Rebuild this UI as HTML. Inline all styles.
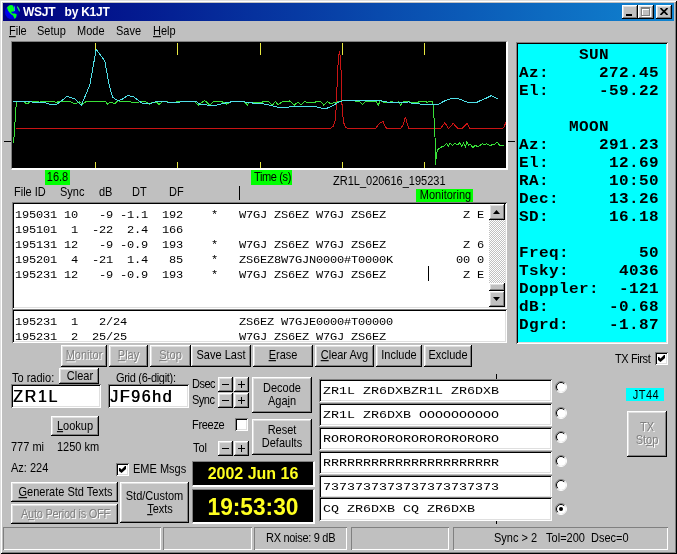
<!DOCTYPE html>
<html><head><meta charset="utf-8"><title>WSJT by K1JT</title>
<style>
html,body{margin:0;padding:0;background:#c0c0c0;}
body{width:677px;height:554px;background:#c0c0c0;position:relative;overflow:hidden;font-family:"Liberation Sans",sans-serif;font-size:11px;color:#000;}
.a{position:absolute;white-space:pre;}
.t{position:absolute;white-space:pre;line-height:13px;height:13px;transform:scaleY(1.125);transform-origin:0 10.3px;}
.bt{display:inline-block;transform:scaleY(1.125);transform-origin:50% 10.3px;}
.btn{position:absolute;background:#c0c0c0;box-shadow:inset -1px -1px 0 #000,inset 1px 1px 0 #fff,inset -2px -2px 0 #808080,inset 2px 2px 0 #dfdfdf;text-align:center;white-space:pre;line-height:13px;box-sizing:border-box;}
.dis{color:#808080;text-shadow:1px 1px 0 #fff;}
.sunk{position:absolute;background:#fff;box-shadow:inset 1px 1px 0 #808080,inset -1px -1px 0 #fff,inset 2px 2px 0 #000,inset -2px -2px 0 #dfdfdf;box-sizing:border-box;}
.g{will-change:transform;}
.mono{font-family:"Liberation Mono",monospace;}
.sb{position:absolute;top:527px;height:23px;box-shadow:inset 1px 1px 0 #808080,inset -1px -1px 0 #fff;box-sizing:border-box;}
.grn{position:absolute;background:#00ff00;}
u{text-decoration:underline;}
.rad{position:absolute;width:12px;height:12px;}
.chk{position:absolute;width:13px;height:13px;background:#fff;box-shadow:inset 1px 1px 0 #808080,inset -1px -1px 0 #fff,inset 2px 2px 0 #000,inset -2px -2px 0 #dfdfdf;box-sizing:border-box;}
</style></head>
<body>
<div class="a" style="left:0;top:0;width:677px;height:554px;box-sizing:border-box;box-shadow:inset 1px 1px 0 #dfdfdf,inset -1px -1px 0 #000,inset 2px 2px 0 #fff,inset -2px -2px 0 #808080;"></div>
<div class="a" style="left:3px;top:3px;width:671px;height:18px;background:linear-gradient(to right,#000080,#1084d0);"></div>
<svg class="a" style="left:4px;top:4px" width="17" height="16" viewBox="0 0 17 16"><defs><radialGradient id="gl" cx="35%" cy="55%" r="70%"><stop offset="0" stop-color="#0000ff"/><stop offset="0.6" stop-color="#0000d8"/><stop offset="1" stop-color="#000080"/></radialGradient></defs><circle cx="8.4" cy="8" r="7.5" fill="url(#gl)"/><path d="M3 3.5 L5 1.6 L7 1 L9 1.6 L10 4 L10.2 7 L9 7.8 L7.6 7.4 L7.2 8.6 L8.5 9.4 L11 9.4 L12.8 10.4 L12.2 13 L10.8 14.9 L10 13.5 L9 11.5 L7.4 10.4 L5.5 8.5 L4 6.5 Z" fill="#00ff20"/><path d="M13.2 2 L14.6 3.4 L15.7 5.5 L15.9 7.7 L14.8 7 L14 5 L13 3.4 Z" fill="#20f060"/><path d="M10.2 1.6 L10.9 3.2 L10.8 7 L10.1 7.2 L10.2 4 Z" fill="#40d0ff"/></svg>
<div class="a g" style="left:23px;top:5px;font-weight:bold;font-size:12px;line-height:14px;color:#fff;letter-spacing:-0.25px;">WSJT   by K1JT</div>
<div class="btn" style="left:622px;top:5px;width:16px;height:14px;"><div class="a" style="left:4px;top:9px;width:6px;height:2px;background:#000"></div></div>
<div class="btn" style="left:638px;top:5px;width:16px;height:14px;"><div class="a" style="left:4px;top:3px;width:9px;height:9px;box-sizing:border-box;border:1px solid #fff;border-top-width:2px"></div><div class="a" style="left:3px;top:2px;width:9px;height:9px;box-sizing:border-box;border:1px solid #808080;border-top-width:2px"></div></div>
<div class="btn" style="left:656px;top:5px;width:16px;height:14px;"><svg class="a" style="left:4px;top:3px" width="8" height="7" viewBox="0 0 8 7"><path d="M0.5 0 L7.5 7 M7.5 0 L0.5 7" stroke="#000" stroke-width="1.7" fill="none"/></svg></div>
<div class="t" style="left:9px;top:25px;"><u>F</u>ile</div>
<div class="t" style="left:37px;top:25px;">Setup</div>
<div class="t" style="left:77px;top:25px;">Mode</div>
<div class="t" style="left:116px;top:25px;">Save</div>
<div class="t" style="left:153px;top:25px;"><u>H</u>elp</div>
<div class="a" style="left:11px;top:41px;width:497px;height:129px;box-sizing:border-box;background:#000;border:1px solid #808080;border-right:2px solid #fff;border-bottom:2px solid #fff;"></div>
<svg class="a" style="left:12px;top:42px" width="494" height="126" viewBox="0 0 494 126"><rect x="83" y="1" width="1" height="12" fill="#e8e840"/><rect x="83" y="120" width="1" height="6" fill="#e8e840"/><rect x="165" y="1" width="1" height="12" fill="#e8e840"/><rect x="165" y="120" width="1" height="6" fill="#e8e840"/><rect x="248" y="1" width="1" height="12" fill="#e8e840"/><rect x="248" y="120" width="1" height="6" fill="#e8e840"/><rect x="330" y="1" width="1" height="12" fill="#e8e840"/><rect x="330" y="120" width="1" height="6" fill="#e8e840"/><rect x="412" y="1" width="1" height="12" fill="#e8e840"/><rect x="412" y="120" width="1" height="6" fill="#e8e840"/><polyline points="3.5,86.7 317.9,86.7 321.0,84.5 322.9,80.3 324.0,68.0 324.6,58.0 325.4,32.3 326.5,16.0 327.5,9.1 328.5,16.0 329.2,32.0 329.7,58.0 330.4,68.0 331.4,80.0 333.4,85.0 336.6,86.7 363.7,86.7 366.6,82.1 371.0,79.2 373.3,85.0 375.5,86.7 388.5,86.7 391.5,82.1 393.4,74.8 395.2,82.1 397.0,86.7 428.4,86.7 432.8,80.7 436.5,86.6 441.2,81.4 446.0,86.7 449.8,86.7 455.0,81.4 458.0,86.7 490.8,86.5 492.4,84.4 493.8,80.3" fill="none" stroke="#c81414" stroke-width="1" shape-rendering="crispEdges"/><polyline points="1.2,101.3 2.4,91.7 3.5,70.3 4.6,59.5 12.0,59.5 15.0,62.2 17.0,60.5 20.2,59.0 23.0,60.0 25.0,58.8 28.0,60.5 30.0,59.0 33.0,59.8 36.0,59.0 40.0,59.3 44.0,60.3 49.7,59.2 57.0,59.2 63.0,62.0 67.4,60.0 70.4,62.0 74.8,59.2 89.6,59.5 93.2,59.2 95.6,62.2 98.3,60.0 102.8,61.5 106.5,58.5 108.7,60.0 113.0,59.2 117.5,59.2 119.8,60.3 126.4,60.3 128.0,59.5 132.3,59.2 137.5,62.2 141.0,60.0 145.0,60.4 147.0,62.5 150.8,59.5 162.0,60.7 166.3,59.0 170.7,60.0 182.5,59.5 186.4,63.2 192.6,58.5 197.8,63.0 202.2,59.2 209.6,59.5 214.8,62.2 219.2,59.5 231.7,59.2 235.4,63.0 237.0,60.4 249.5,60.5 252.4,59.2 256.0,59.2 260.5,63.0 263.5,59.5 266.0,63.0 270.0,60.0 277.5,59.0 282.4,63.0 286.0,60.0 289.0,63.0 292.8,59.5 295.0,60.4 303.0,60.4 304.6,59.2 308.3,59.5 311.7,63.0 315.7,59.5 318.0,61.5 323.8,60.4 328.2,59.2 332.7,58.5 347.4,59.2 350.4,62.6 354.0,59.2 363.7,59.0 366.3,63.0 368.4,58.5 371.0,60.0 378.0,60.7 379.0,59.5 381.9,60.4 386.3,60.0 388.5,63.0 391.5,59.5 396.6,59.0 399.6,61.0 405.5,60.7 407.7,59.0 413.6,59.0 415.0,60.4 417.3,59.0 420.3,59.0 421.4,63.7 422.2,80.0 423.0,95.4 423.3,108.0 423.7,123.4 424.3,112.0 425.5,108.0 428.3,105.5 432.4,103.9 434.3,101.4 436.4,103.9 438.0,101.1 440.5,103.4 442.9,101.4 446.1,102.7 447.8,100.6 449.9,104.4 451.5,101.1 453.5,104.7 454.8,99.5 456.7,103.4 458.3,102.3 460.8,105.5 463.2,103.1 465.6,104.7 470.5,101.8 472.1,102.7 474.6,101.8 477.8,103.4 482.7,102.3 485.1,100.1 487.5,103.1 491.6,103.4" fill="none" stroke="#38e038" stroke-width="1" shape-rendering="crispEdges"/><polyline points="1.0,59.3 12.8,59.3 20.0,60.0 31.0,60.0 38.0,62.2 45.3,62.0 49.0,59.2 54.9,54.4 62.3,56.6 69.6,63.4 71.5,58.0 75.5,48.5 77.8,43.0 84.2,7.3 92.8,18.8 97.3,44.0 100.7,55.4 105.7,58.5 109.4,57.8 116.0,53.3 122.0,55.1 130.0,61.0 138.2,61.5 145.6,59.2 153.0,59.2 157.4,60.7 164.8,60.7 172.2,59.2 184.0,59.2 187.4,62.0 194.8,63.0 205.0,63.0 211.0,61.5 218.5,60.0 224.4,59.2 230.3,59.2 234.7,60.7 249.5,61.5 256.9,63.0 265.7,65.2 276.0,65.2 280.0,64.4 287.0,64.9 304.6,64.9 311.2,66.6 314.2,66.6 320.8,63.7 326.7,60.0 332.7,58.2 366.6,58.5 372.5,59.5 378.0,60.7 383.3,60.4 396.6,60.0 399.6,61.5 407.0,61.9 411.4,62.5 426.2,62.5 432.0,59.2 438.0,57.0 442.4,56.3 448.3,57.3 455.7,60.4 464.6,60.4 471.2,57.3 472.9,56.8 479.4,53.6 485.6,56.8" fill="none" stroke="#50e0e8" stroke-width="1" shape-rendering="crispEdges"/></svg>
<div class="a" style="left:4px;top:141px;width:7px;height:1px;background:#000"></div>
<div class="a" style="left:508px;top:141px;width:7px;height:1px;background:#000"></div>
<div class="grn" style="left:45px;top:170px;width:25px;height:15px;"></div>
<div class="t" style="left:45px;top:171px;width:25px;text-align:center;">16.8</div>
<div class="grn" style="left:251px;top:170px;width:41px;height:15px;"></div>
<div class="t" style="left:252px;top:171px;width:41px;text-align:center;letter-spacing:-0.35px;">Time (s)</div>
<div class="t" style="left:333px;top:175px;">ZR1L_020616_195231</div>
<div class="grn" style="left:416px;top:189px;width:57px;height:13px;"></div>
<div class="t" style="left:417px;top:189px;width:57px;text-align:center;">Monitoring</div>
<div class="t" style="left:14px;top:186px;">File ID</div>
<div class="t" style="left:60px;top:186px;">Sync</div>
<div class="t" style="left:99px;top:186px;">dB</div>
<div class="t" style="left:132px;top:186px;">DT</div>
<div class="t" style="left:169px;top:186px;">DF</div>
<div class="a" style="left:239px;top:186px;width:1px;height:14px;background:#000"></div>
<div class="sunk" style="left:12px;top:202px;width:495px;height:107px;"></div>
<div class="a mono" style="left:15px;top:207.5px;font-size:12px;line-height:15px;height:15px;letter-spacing:-0.2px;color:#000;transform:scaleY(0.87);transform-origin:0 10.69px;">195031 10   -9 -1.1  192    *   W7GJ ZS6EZ W7GJ ZS6EZ           Z E</div>
<div class="a mono" style="left:15px;top:222.5px;font-size:12px;line-height:15px;height:15px;letter-spacing:-0.2px;color:#000;transform:scaleY(0.87);transform-origin:0 10.69px;">195101  1  -22  2.4  166</div>
<div class="a mono" style="left:15px;top:237.5px;font-size:12px;line-height:15px;height:15px;letter-spacing:-0.2px;color:#000;transform:scaleY(0.87);transform-origin:0 10.69px;">195131 12   -9 -0.9  193    *   W7GJ ZS6EZ W7GJ ZS6EZ           Z 6</div>
<div class="a mono" style="left:15px;top:252.5px;font-size:12px;line-height:15px;height:15px;letter-spacing:-0.2px;color:#000;transform:scaleY(0.87);transform-origin:0 10.69px;">195201  4  -21  1.4   85    *   ZS6EZ8W7GJN0000#T0000K         00 0</div>
<div class="a mono" style="left:15px;top:267.5px;font-size:12px;line-height:15px;height:15px;letter-spacing:-0.2px;color:#000;transform:scaleY(0.87);transform-origin:0 10.69px;">195231 12   -9 -0.9  193    *   W7GJ ZS6EZ W7GJ ZS6EZ           Z E</div>
<div class="a" style="left:428px;top:266px;width:1px;height:15px;background:#000"></div>
<div class="a" style="left:489px;top:204px;width:16px;height:103px;background:repeating-conic-gradient(#fff 0% 25%, #c0c0c0 0% 50%) 0 0/2px 2px;"></div>
<div class="btn" style="left:489px;top:204px;width:16px;height:16px;"><svg class="a" style="left:4px;top:6px" width="7" height="4"><path d="M0 4 L3.5 0 L7 4 Z" fill="#000"/></svg></div>
<div class="btn" style="left:489px;top:283px;width:16px;height:8px;"></div>
<div class="btn" style="left:489px;top:291px;width:16px;height:16px;"><svg class="a" style="left:4px;top:6px" width="7" height="4"><path d="M0 0 L3.5 4 L7 0 Z" fill="#000"/></svg></div>
<div class="sunk" style="left:12px;top:309px;width:495px;height:34px;"></div>
<div class="a mono" style="left:15px;top:314.5px;font-size:12px;line-height:15px;height:15px;letter-spacing:-0.2px;color:#000;transform:scaleY(0.87);transform-origin:0 10.69px;">195231  1   2/24                ZS6EZ W7GJE0000#T00000</div>
<div class="a mono" style="left:15px;top:329.5px;font-size:12px;line-height:15px;height:15px;letter-spacing:-0.2px;color:#000;transform:scaleY(0.87);transform-origin:0 10.69px;">195231  2  25/25                W7GJ ZS6EZ W7GJ ZS6EZ</div>
<div class="btn dis" style="left:61px;top:345px;width:46px;height:22px;padding-top:4px;"><span class="bt"><u>M</u>onitor</span></div>
<div class="btn dis" style="left:109px;top:345px;width:39px;height:22px;padding-top:4px;"><span class="bt"><u>P</u>lay</span></div>
<div class="btn dis" style="left:150px;top:345px;width:41px;height:22px;padding-top:4px;"><span class="bt"><u>S</u>top</span></div>
<div class="btn" style="left:191px;top:345px;width:60px;height:22px;padding-top:4px;"><span class="bt">Save Last</span></div>
<div class="btn" style="left:253px;top:345px;width:60px;height:22px;padding-top:4px;"><span class="bt"><u>E</u>rase</span></div>
<div class="btn" style="left:315px;top:345px;width:59px;height:22px;padding-top:4px;"><span class="bt"><u>C</u>lear Avg</span></div>
<div class="btn" style="left:376px;top:345px;width:46px;height:22px;padding-top:4px;"><span class="bt">Include</span></div>
<div class="btn" style="left:424px;top:345px;width:48px;height:22px;padding-top:4px;"><span class="bt">Exclude</span></div>
<div class="sunk" style="left:516px;top:42px;width:152px;height:302px;background:#00ffff;"></div>
<div class="a mono" style="left:519px;top:45.5px;font-size:16px;line-height:18px;height:18px;letter-spacing:0.4px;font-weight:bold;color:#000;transform:scaleY(0.87);transform-origin:0 13.26px;">      SUN</div>
<div class="a mono" style="left:519px;top:63.5px;font-size:16px;line-height:18px;height:18px;letter-spacing:0.4px;font-weight:bold;color:#000;transform:scaleY(0.87);transform-origin:0 13.26px;">Az:     272.45</div>
<div class="a mono" style="left:519px;top:81.5px;font-size:16px;line-height:18px;height:18px;letter-spacing:0.4px;font-weight:bold;color:#000;transform:scaleY(0.87);transform-origin:0 13.26px;">El:     -59.22</div>
<div class="a mono" style="left:519px;top:117.5px;font-size:16px;line-height:18px;height:18px;letter-spacing:0.4px;font-weight:bold;color:#000;transform:scaleY(0.87);transform-origin:0 13.26px;">     MOON</div>
<div class="a mono" style="left:519px;top:135.5px;font-size:16px;line-height:18px;height:18px;letter-spacing:0.4px;font-weight:bold;color:#000;transform:scaleY(0.87);transform-origin:0 13.26px;">Az:     291.23</div>
<div class="a mono" style="left:519px;top:153.5px;font-size:16px;line-height:18px;height:18px;letter-spacing:0.4px;font-weight:bold;color:#000;transform:scaleY(0.87);transform-origin:0 13.26px;">El:      12.69</div>
<div class="a mono" style="left:519px;top:171.5px;font-size:16px;line-height:18px;height:18px;letter-spacing:0.4px;font-weight:bold;color:#000;transform:scaleY(0.87);transform-origin:0 13.26px;">RA:      10:50</div>
<div class="a mono" style="left:519px;top:189.5px;font-size:16px;line-height:18px;height:18px;letter-spacing:0.4px;font-weight:bold;color:#000;transform:scaleY(0.87);transform-origin:0 13.26px;">Dec:     13.26</div>
<div class="a mono" style="left:519px;top:207.5px;font-size:16px;line-height:18px;height:18px;letter-spacing:0.4px;font-weight:bold;color:#000;transform:scaleY(0.87);transform-origin:0 13.26px;">SD:      16.18</div>
<div class="a mono" style="left:519px;top:243.5px;font-size:16px;line-height:18px;height:18px;letter-spacing:0.4px;font-weight:bold;color:#000;transform:scaleY(0.87);transform-origin:0 13.26px;">Freq:       50</div>
<div class="a mono" style="left:519px;top:261.5px;font-size:16px;line-height:18px;height:18px;letter-spacing:0.4px;font-weight:bold;color:#000;transform:scaleY(0.87);transform-origin:0 13.26px;">Tsky:     4036</div>
<div class="a mono" style="left:519px;top:279.5px;font-size:16px;line-height:18px;height:18px;letter-spacing:0.4px;font-weight:bold;color:#000;transform:scaleY(0.87);transform-origin:0 13.26px;">Doppler:  -121</div>
<div class="a mono" style="left:519px;top:297.5px;font-size:16px;line-height:18px;height:18px;letter-spacing:0.4px;font-weight:bold;color:#000;transform:scaleY(0.87);transform-origin:0 13.26px;">dB:      -0.68</div>
<div class="a mono" style="left:519px;top:315.5px;font-size:16px;line-height:18px;height:18px;letter-spacing:0.4px;font-weight:bold;color:#000;transform:scaleY(0.87);transform-origin:0 13.26px;">Dgrd:    -1.87</div>
<div class="t" style="left:615px;top:353px;letter-spacing:-0.4px;">TX First</div>
<div class="chk" style="left:655px;top:352px;"><svg class="a" style="left:3px;top:3px" width="7" height="7"><path d="M0 2 L1 2 L2.5 3.5 L6 0 L7 0 L7 3 L2.5 7 L0 5 Z" fill="#000"/></svg></div>
<div class="a" style="left:626px;top:388px;width:38px;height:13px;background:#00ffff;"></div>
<div class="t" style="left:627px;top:389px;width:38px;text-align:center;letter-spacing:0.5px;">JT44</div>
<div class="btn dis" style="left:627px;top:411px;width:40px;height:46px;padding-top:10px;line-height:12.5px;"><span class="bt">TX</span>
<span class="bt">St<u>o</u>p</span></div>
<div class="t" style="left:12px;top:372px;">To radio:</div>
<div class="btn" style="left:59px;top:368px;width:40px;height:16px;padding-top:2px;padding-left:2px;"><span class="bt">Clear</span></div>
<div class="sunk" style="left:11px;top:384px;width:90px;height:24px;"></div>
<div class="a g" style="left:13px;top:388px;font-size:16px;line-height:18px;letter-spacing:1.7px;text-shadow:0.5px 0 0 #000;">ZR1L</div>
<div class="t" style="left:116px;top:372px;letter-spacing:-0.3px;">Grid (6-digit):</div>
<div class="sunk" style="left:108px;top:384px;width:81px;height:24px;"></div>
<div class="a g" style="left:110px;top:388px;font-size:16px;line-height:18px;letter-spacing:1.6px;text-shadow:0.6px 0 0 #000;">JF96hd</div>
<div class="btn" style="left:51px;top:416px;width:48px;height:20px;padding-top:4px;"><span class="bt"><u>L</u>ookup</span></div>
<div class="t" style="left:11px;top:441px;">777 mi</div>
<div class="t" style="left:57px;top:441px;">1250 km</div>
<div class="t" style="left:11px;top:462px;">Az: 224</div>
<div class="chk" style="left:116px;top:463px;"><svg class="a" style="left:3px;top:3px" width="7" height="7"><path d="M0 2 L1 2 L2.5 3.5 L6 0 L7 0 L7 3 L2.5 7 L0 5 Z" fill="#000"/></svg></div>
<div class="t" style="left:133px;top:463px;letter-spacing:0px;">EME Msgs</div>
<div class="btn" style="left:11px;top:482px;width:107px;height:20px;padding-top:4px;padding-left:2px;"><span class="bt"><u>G</u>enerate Std Texts</span></div>
<div class="btn dis" style="left:11px;top:504px;width:107px;height:20px;padding-top:4px;padding-left:2px;letter-spacing:-0.25px;"><span class="bt">A<u>u</u>to Period is OFF</span></div>
<div class="btn" style="left:120px;top:482px;width:69px;height:41px;padding-top:8px;"><span class="bt">Std/Custom</span>
<span class="bt" style="margin-left:11px"><u>T</u>exts</span></div>
<div class="t" style="left:192px;top:378px;width:23px;overflow:hidden;letter-spacing:-0.5px;">Dsec</div>
<div class="t" style="left:192px;top:394px;width:23px;overflow:hidden;letter-spacing:-0.5px;">Sync</div>
<div class="t" style="left:192px;top:419px;letter-spacing:-0.3px;">Freeze</div>
<div class="t" style="left:193px;top:442px;">Tol</div>
<div class="btn" style="left:218px;top:377px;width:15px;height:15px;"><div class="a" style="left:4px;top:7px;width:7px;height:1px;background:#000"></div></div>
<div class="btn" style="left:234px;top:377px;width:15px;height:15px;"><div class="a" style="left:4px;top:7px;width:7px;height:1px;background:#000"></div><div class="a" style="left:7px;top:4px;width:1px;height:7px;background:#000"></div></div>
<div class="btn" style="left:218px;top:393px;width:15px;height:15px;"><div class="a" style="left:4px;top:7px;width:7px;height:1px;background:#000"></div></div>
<div class="btn" style="left:234px;top:393px;width:15px;height:15px;"><div class="a" style="left:4px;top:7px;width:7px;height:1px;background:#000"></div><div class="a" style="left:7px;top:4px;width:1px;height:7px;background:#000"></div></div>
<div class="btn" style="left:218px;top:441px;width:15px;height:15px;"><div class="a" style="left:4px;top:7px;width:7px;height:1px;background:#000"></div></div>
<div class="btn" style="left:234px;top:441px;width:15px;height:15px;"><div class="a" style="left:4px;top:7px;width:7px;height:1px;background:#000"></div><div class="a" style="left:7px;top:4px;width:1px;height:7px;background:#000"></div></div>
<div class="chk" style="left:235px;top:418px;"></div>
<div class="btn" style="left:252px;top:377px;width:60px;height:36px;padding-top:5px;"><span class="bt">Decode</span>
<span class="bt">Aga<u>i</u>n</span></div>
<div class="btn" style="left:252px;top:419px;width:60px;height:36px;padding-top:5px;"><span class="bt">Reset</span>
<span class="bt">Defaults</span></div>
<div class="a" style="left:192px;top:461px;width:123px;height:26px;box-sizing:border-box;background:#000;border:1px solid #808080;border-right:2px solid #fff;border-bottom:2px solid #fff;"></div>
<div class="a g" style="left:193px;top:465px;width:120px;text-align:center;font-size:16px;font-weight:bold;line-height:18px;color:#ffff20;">2002 Jun 16</div>
<div class="a" style="left:192px;top:489px;width:123px;height:35px;box-sizing:border-box;background:#000;border:1px solid #808080;border-right:2px solid #fff;border-bottom:2px solid #fff;"></div>
<div class="a g" style="left:193px;top:494px;width:120px;text-align:center;font-size:22.7px;font-weight:bold;line-height:26px;color:#ffff20;transform:scaleY(1.05);transform-origin:50% 20.85px;">19:53:30</div>
<div class="a" style="left:496px;top:374px;width:1px;height:5px;background:#000"></div>
<div class="a" style="left:496px;top:521px;width:1px;height:3px;background:#000"></div>
<div class="sunk" style="left:319px;top:379px;width:233px;height:23px;"></div>
<div class="a mono" style="left:323px;top:383px;font-size:13.33px;line-height:15px;height:15px;letter-spacing:0px;color:#000;transform:scaleY(0.87);transform-origin:0 11.05px;">ZR1L ZR6DXBZR1L ZR6DXB</div>
<div class="sunk" style="left:319px;top:403px;width:233px;height:23px;"></div>
<div class="a mono" style="left:323px;top:407px;font-size:13.33px;line-height:15px;height:15px;letter-spacing:0px;color:#000;transform:scaleY(0.87);transform-origin:0 11.05px;">ZR1L ZR6DXB OOOOOOOOOO</div>
<div class="sunk" style="left:319px;top:427px;width:233px;height:23px;"></div>
<div class="a mono" style="left:323px;top:431px;font-size:13.33px;line-height:15px;height:15px;letter-spacing:0px;color:#000;transform:scaleY(0.87);transform-origin:0 11.05px;">RORORORORORORORORORORO</div>
<div class="sunk" style="left:319px;top:451px;width:233px;height:23px;"></div>
<div class="a mono" style="left:323px;top:455px;font-size:13.33px;line-height:15px;height:15px;letter-spacing:0px;color:#000;transform:scaleY(0.87);transform-origin:0 11.05px;">RRRRRRRRRRRRRRRRRRRRRR</div>
<div class="sunk" style="left:319px;top:475px;width:233px;height:23px;"></div>
<div class="a mono" style="left:323px;top:479px;font-size:13.33px;line-height:15px;height:15px;letter-spacing:0px;color:#000;transform:scaleY(0.87);transform-origin:0 11.05px;">7373737373737373737373</div>
<div class="sunk" style="left:319px;top:497px;width:233px;height:24px;"></div>
<div class="a mono" style="left:323px;top:501px;font-size:13.33px;line-height:15px;height:15px;letter-spacing:0px;color:#000;transform:scaleY(0.87);transform-origin:0 11.05px;">CQ ZR6DXB CQ ZR6DXB</div>
<svg class="rad" style="left:555px;top:381.0px" viewBox="0 0 12 12"><circle cx="6" cy="6" r="5" fill="#fff"/><path d="M2.1 9.9 A5.5 5.5 0 0 1 9.9 2.1" fill="none" stroke="#808080" stroke-width="1"/><path d="M2.8 9.2 A4.5 4.5 0 0 1 9.2 2.8" fill="none" stroke="#000" stroke-width="1"/><path d="M9.9 2.1 A5.5 5.5 0 0 1 2.1 9.9" fill="none" stroke="#fff" stroke-width="1"/></svg>
<svg class="rad" style="left:555px;top:407.0px" viewBox="0 0 12 12"><circle cx="6" cy="6" r="5" fill="#fff"/><path d="M2.1 9.9 A5.5 5.5 0 0 1 9.9 2.1" fill="none" stroke="#808080" stroke-width="1"/><path d="M2.8 9.2 A4.5 4.5 0 0 1 9.2 2.8" fill="none" stroke="#000" stroke-width="1"/><path d="M9.9 2.1 A5.5 5.5 0 0 1 2.1 9.9" fill="none" stroke="#fff" stroke-width="1"/></svg>
<svg class="rad" style="left:555px;top:431.0px" viewBox="0 0 12 12"><circle cx="6" cy="6" r="5" fill="#fff"/><path d="M2.1 9.9 A5.5 5.5 0 0 1 9.9 2.1" fill="none" stroke="#808080" stroke-width="1"/><path d="M2.8 9.2 A4.5 4.5 0 0 1 9.2 2.8" fill="none" stroke="#000" stroke-width="1"/><path d="M9.9 2.1 A5.5 5.5 0 0 1 2.1 9.9" fill="none" stroke="#fff" stroke-width="1"/></svg>
<svg class="rad" style="left:555px;top:455.0px" viewBox="0 0 12 12"><circle cx="6" cy="6" r="5" fill="#fff"/><path d="M2.1 9.9 A5.5 5.5 0 0 1 9.9 2.1" fill="none" stroke="#808080" stroke-width="1"/><path d="M2.8 9.2 A4.5 4.5 0 0 1 9.2 2.8" fill="none" stroke="#000" stroke-width="1"/><path d="M9.9 2.1 A5.5 5.5 0 0 1 2.1 9.9" fill="none" stroke="#fff" stroke-width="1"/></svg>
<svg class="rad" style="left:555px;top:479.0px" viewBox="0 0 12 12"><circle cx="6" cy="6" r="5" fill="#fff"/><path d="M2.1 9.9 A5.5 5.5 0 0 1 9.9 2.1" fill="none" stroke="#808080" stroke-width="1"/><path d="M2.8 9.2 A4.5 4.5 0 0 1 9.2 2.8" fill="none" stroke="#000" stroke-width="1"/><path d="M9.9 2.1 A5.5 5.5 0 0 1 2.1 9.9" fill="none" stroke="#fff" stroke-width="1"/></svg>
<svg class="rad" style="left:555px;top:503.0px" viewBox="0 0 12 12"><circle cx="6" cy="6" r="5" fill="#fff"/><path d="M2.1 9.9 A5.5 5.5 0 0 1 9.9 2.1" fill="none" stroke="#808080" stroke-width="1"/><path d="M2.8 9.2 A4.5 4.5 0 0 1 9.2 2.8" fill="none" stroke="#000" stroke-width="1"/><path d="M9.9 2.1 A5.5 5.5 0 0 1 2.1 9.9" fill="none" stroke="#fff" stroke-width="1"/><circle cx="6" cy="6" r="2" fill="#000"/></svg>
<div class="sb" style="left:3px;width:158px;"></div>
<div class="sb" style="left:163px;width:89px;"></div>
<div class="sb" style="left:254px;width:93px;"></div>
<div class="sb" style="left:351px;width:98px;"></div>
<div class="sb" style="left:453px;width:215px;"></div>
<div class="t" style="left:266px;top:532px;letter-spacing:-0.3px;">RX noise: 9 dB</div>
<div class="t" style="left:494px;top:532px;">Sync &gt; 2   Tol=200  Dsec=0</div>
</body></html>
